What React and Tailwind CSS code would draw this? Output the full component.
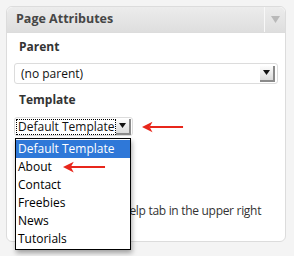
const options = ['Default Template', 'About', 'Contact', 'Freebies', 'News', 'Tutorials'];

const RedArrow = ({ className }) => (
  <svg className={className} viewBox="0 0 44 12" fill="none">
    <path d="M8 6 H43" stroke="#e8261b" strokeWidth="2.2" />
    <path d="M0 6 L11 0.5 L8 6 L11 11.5 Z" fill="#e8261b" />
  </svg>
);

const SelectButton = () => (
  <span className="flex h-[16px] w-[15px] items-center justify-center border-r-2 border-b-2 border-[#8a8a8a] bg-gradient-to-b from-[#fdfdfd] to-[#dadada]">
    <svg width="7" height="5" viewBox="0 0 7 5">
      <path d="M0 0 H7 L3.5 5 Z" fill="#111" />
    </svg>
  </span>
);

export default function App() {
  return (
    <div className="h-[256px] w-[294px] bg-[#f4f4f4] pt-[6px] pl-[6px] font-['Open_Sans',sans-serif] text-[#333]">
      <div className="relative h-[236px] w-[280px] rounded-[6px] border border-[#dcdcdc] bg-white">
        <div className="flex h-[26px] items-center rounded-t-[6px] border-b border-[#dcdcdc] bg-gradient-to-b from-[#ececec] to-[#dedede]">
          <h3 className="flex-1 pl-[9px] text-[12.5px] font-bold text-[#464646]">Page Attributes</h3>
          <div className="flex h-full w-[21px] items-center justify-center border-l border-[#f8f8f8]">
            <svg width="9" height="7" viewBox="0 0 9 7">
              <path d="M0 0 H9 L4.5 7 Z" fill="#b9b9b9" />
            </svg>
          </div>
        </div>

        <div className="px-[7px]">
          <p className="mt-[7px] pl-[5px] text-[12px] font-bold leading-[14px]">Parent</p>
          <div className="mt-[9px] flex h-[21px] items-center justify-between rounded-[3px] border border-[#dcdcdc] pr-[2px] pl-[6px] text-[12px] text-[#111]">
            <span>(no parent)</span>
            <SelectButton />
          </div>

          <p className="mt-[9px] pl-[5px] text-[12px] font-bold leading-[14px]">Template</p>
          <div className="mt-[10px] flex items-center">
            <div className="flex h-[19px] items-center rounded-[3px] border border-[#dcdcdc] p-[1px]">
              <span className="flex h-[16px] items-center border border-dotted border-black px-[1px] text-[12px] whitespace-nowrap text-[#111]">Default Template</span>
              <SelectButton />
            </div>
            <RedArrow className="ml-[9px] h-[12px] w-[42px]" />
          </div>

          <p className="mt-[66px] pl-[1px] text-[12px] leading-[18px] tracking-[-0.3px] whitespace-nowrap text-[#333]">
            Need help? Use the Help tab in the upper right
            <br />
            of your screen.
          </p>
        </div>

        <ul className="absolute top-[131px] left-[8px] w-[116px] border border-black bg-white py-[1px] text-[12px] text-black shadow-[1px_3px_5px_rgba(0,0,0,0.35)]">
          {options.map((o, i) => (
            <li
              key={o}
              className={`flex h-[18px] items-center pl-[2px] ${i === 0 ? 'bg-[#2f78d8] text-white' : ''}`}
            >
              {o}
            </li>
          ))}
        </ul>
        <RedArrow className="absolute top-[154px] left-[56px] h-[12px] w-[43px]" />
      </div>
    </div>
  );
}
